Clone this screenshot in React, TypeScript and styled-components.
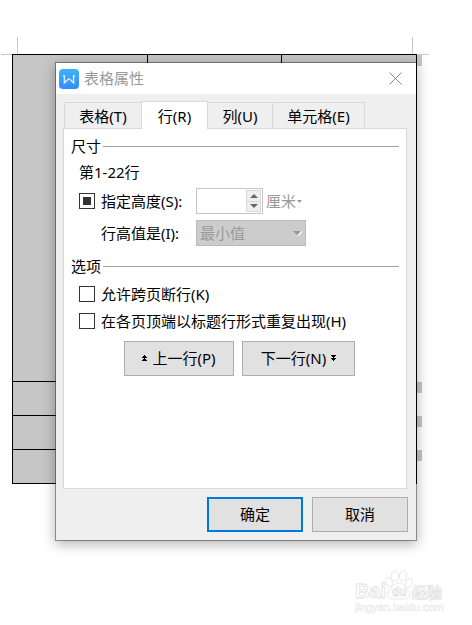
import React, { useEffect, useRef } from 'react';
import styled, { createGlobalStyle } from 'styled-components';

const GlobalStyle = createGlobalStyle`
  * { box-sizing: border-box; }
  body {
    margin: 0;
    background: #fff;
    color: #000;
    font-family: "Noto Sans", "Noto Sans CJK SC", sans-serif;
    font-size: 15px;
    font-weight: 400;
    line-height: 20px;
  }
  button, input, select { font: inherit; color: inherit; margin: 0; }
  svg { display: block; flex: none; }
`;

const Page = styled.main`
  display: grid;
  grid-template-columns: minmax(0, 1fr);
  min-height: 100vh;
  position: relative;
`;

const Sheet = styled.div`
  grid-area: 1 / 1;
  margin: 54px 55px 0 12px;
  align-self: start;
  position: relative;
`;

const SheetTable = styled.table`
  width: 100%;
  table-layout: fixed;
  border-collapse: separate;
  border-spacing: 0;
  background: #c6c6c6;
  border: solid #000;
  border-width: 1px 0 0 1px;
`;

const SheetRow = styled.tr<{ $tall?: boolean }>`
  height: ${p => (p.$tall ? 327 : 34)}px;
`;

const SheetCell = styled.td`
  padding: 0;
  border: solid #000;
  border-width: 0 1px 1px 0;
  position: relative;
`;

const RowEndMark = styled.span`
  position: absolute;
  top: 0;
  right: -6px;
  width: 5px;
  height: 11px;
  background: #c6c6c6;
`;

const CropMark = styled.span<{ $side: 'left' | 'right' }>`
  position: absolute;
  top: -17px;
  ${p => p.$side}: ${p => (p.$side === 'left' ? 5 : 4)}px;
  width: 1px;
  height: 17px;
  background: #c8c8c8;
  &::after {
    content: '';
    position: absolute;
    top: 17px;
    ${p => p.$side}: -16px;
    width: 11px;
    height: 1px;
    background: #c8c8c8;
  }
`;

const Dialog = styled.section`
  grid-area: 1 / 1;
  align-self: start;
  position: relative;
  margin: 62px 55px 0;
  border: 1px solid rgba(0, 0, 0, 0.36);
  background: #efefef;
  background-clip: padding-box;
  box-shadow: 0 3px 12px rgba(0, 0, 0, 0.3);
`;

const TitleBar = styled.header`
  display: flex;
  align-items: center;
  height: 31px;
  padding: 0 14px 0 3px;
  gap: 5px;
  background: #fff;
`;

const Title = styled.h1`
  flex: 1;
  margin: 0;
  padding-bottom: 2px;
  font-size: 15px;
  font-weight: 400;
  color: #999;
`;

const CloseButton = styled.button`
  display: flex;
  padding: 0;
  border: 0;
  background: none;
`;

const TabList = styled.div`
  display: flex;
  align-items: flex-end;
  padding: 7px 8px 0;
`;

const Tab = styled.button<{ $width: number; $active?: boolean }>`
  flex: none;
  width: ${p => p.$width}px;
  height: ${p => (p.$active ? 28 : 26)}px;
  margin-bottom: ${p => (p.$active ? -1 : 0)}px;
  padding: 0;
  border: solid #d9d9d9;
  border-width: ${p => (p.$active ? '1px 1px 0' : '1px 0 0')};
  background: ${p => (p.$active ? '#fff' : '#efefef')};
  position: relative;
  &:first-child { border-left-width: 1px; }
  &:last-child { border-width: 1px 1px 0; }
`;

const Panel = styled.div`
  margin: 0 9px 0 7px;
  padding: 7px 7px 112px;
  border: 1px solid #d9d9d9;
  background: #fff;
`;

const Group = styled.fieldset`
  margin: 0;
  padding: 0;
  border: 0;
  min-width: 0;
  & + & { margin-top: 10px; }
`;

const Legend = styled.legend`
  display: flex;
  align-items: center;
  gap: 2px;
  width: 100%;
  padding: 0;
  &::after {
    content: '';
    flex: 1;
    height: 1px;
    background: #a0a0a0;
  }
`;

const GroupBody = styled.div<{ $top: number; $gap: number }>`
  display: flex;
  flex-direction: column;
  gap: ${p => p.$gap}px;
  padding: ${p => p.$top}px 8px 0;
`;

const FieldRow = styled.div`
  display: grid;
  grid-template-columns: 117px auto 1fr;
  align-items: center;
  height: 26px;
`;

const CheckLabel = styled.label`
  display: flex;
  align-items: center;
  gap: 6px;
  white-space: nowrap;
`;

const IndentedLabel = styled.label`
  padding-left: 22px;
  white-space: nowrap;
`;

const CheckInput = styled.input`
  appearance: none;
  width: 16px;
  height: 16px;
  border: 1px solid #333;
  background: #fff;
  display: grid;
  place-items: center;
  &:indeterminate::before {
    content: '';
    width: 8px;
    height: 8px;
    background: #333;
  }
`;

const SpinBox = styled.div`
  display: flex;
  width: 67px;
  height: 26px;
  padding: 1px;
  border: 1px solid #c6c6c6;
  background: #fff;
`;

const SpinInput = styled.input`
  flex: 1;
  min-width: 0;
  padding: 0 4px;
  border: 0;
  background: none;
`;

const SpinButtons = styled.div`
  display: flex;
  flex-direction: column;
  width: 15px;
  border: 1px solid #d9d9d9;
`;

const SpinButton = styled.button`
  flex: 1;
  display: flex;
  align-items: center;
  justify-content: center;
  padding: 0;
  border: 0;
  background: #efefef;
  & + & { border-top: 1px solid #d9d9d9; }
`;

const UnitButton = styled.button`
  display: flex;
  align-items: center;
  justify-self: start;
  gap: 1px;
  padding: 0;
  margin-left: 3px;
  border: 0;
  background: none;
  color: #999;
`;

const SelectWrap = styled.div`
  display: grid;
  align-items: center;
  width: 110px;
`;

const RuleSelect = styled.select`
  grid-area: 1 / 1;
  appearance: none;
  width: 100%;
  height: 26px;
  padding: 0 0 0 3px;
  border: 1px solid #bcbcbc;
  border-radius: 0;
  background: #ccc;
  color: #999;
  opacity: 1;
`;

const SelectArrow = styled.svg`
  grid-area: 1 / 1;
  justify-self: end;
  margin-right: 4px;
  pointer-events: none;
`;

const StepButtons = styled.div`
  display: grid;
  grid-template-columns: 110px 113px;
  justify-content: center;
  gap: 8px;
  padding: 10px 0 0 9px;
`;

const Button = styled.button<{ $primary?: boolean }>`
  display: flex;
  align-items: center;
  justify-content: center;
  gap: 5px;
  height: 35px;
  padding: 0 0 2px;
  border: ${p => (p.$primary ? '2px solid #0078d7' : '1px solid #adadad')};
  background: #e1e1e1;
`;

const Footer = styled.footer`
  display: grid;
  grid-template-columns: 96px 96px;
  justify-content: end;
  gap: 9px;
  padding: 8px;
`;

const Watermark = styled.div`
  position: absolute;
  right: 26px;
  bottom: 11px;
  width: 92px;
`;

function WpsLogo() {
  return (
    <svg width="20" height="20" viewBox="0 0 20 20" aria-hidden="true">
      <defs>
        <linearGradient id="wps" x1="0" y1="0" x2="0" y2="1">
          <stop offset="0" stopColor="#3fb2fc" />
          <stop offset="1" stopColor="#328dfb" />
        </linearGradient>
      </defs>
      <rect width="20" height="20" rx="4" fill="url(#wps)" />
      <path d="M4 6.7h1.4v7.1L10 9.6l4.6 4.2V6.7H16" fill="none" stroke="#d9eeff" strokeWidth="1.4" />
    </svg>
  );
}

function Triangle({ w, h, up, color }: { w: number; h: number; up?: boolean; color: string }) {
  return (
    <svg width={w} height={h} viewBox={`0 0 ${w} ${h}`} aria-hidden="true">
      <path d={up ? `M0 ${h}L${w / 2} 0L${w} ${h}z` : `M0 0H${w}L${w / 2} ${h}z`} fill={color} />
    </svg>
  );
}

function DoubleArrow({ down }: { down?: boolean }) {
  return (
    <svg width="5" height="6" viewBox="0 0 5 6" shapeRendering="crispEdges" aria-hidden="true">
      <path
        d={down ? 'M0 0h5v1H4v1H3v1h2v1H4v1H3v1H2V5H1V4H0V3h2V2H1V1H0z' : 'M2 0h1v1h1v1h1v1H3v1h1v1h1v1H0V5h1V4h1V3H0V2h1V1h1z'}
      />
    </svg>
  );
}

function BaiduMark() {
  return (
    <Watermark>
      <svg width="92" height="44" viewBox="0 0 92 44" role="img" aria-label="Baidu 经验 jingyan.baidu.com">
        <g fill="#fff" stroke="#e2e2e2" strokeWidth="0.8" fontFamily="Liberation Sans, sans-serif" fontWeight="700">
          <text x="1" y="28" fontSize="20">Bai</text>
          <ellipse cx="35" cy="12" rx="3.3" ry="4.6" transform="rotate(-15 35 12)" />
          <ellipse cx="41" cy="6" rx="3.6" ry="5" />
          <ellipse cx="49" cy="6" rx="3.6" ry="5" transform="rotate(10 49 6)" />
          <ellipse cx="55" cy="13" rx="3.3" ry="4.6" transform="rotate(15 55 13)" />
          <path d="M45 13c5 0 6 5 9 8 4 4 1 8-4 8H39c-6 0-7-5-4-9 3-3 5-7 10-7z" />
          <text x="38" y="26" fontSize="12">du</text>
          <text x="58" y="28" fontSize="15" fontFamily="Noto Sans CJK SC, sans-serif">经验</text>
        </g>
        <text x="1" y="41" fontSize="11" fontFamily="Liberation Sans, sans-serif" fill="#f4f4f4" stroke="#ececec" strokeWidth="0.6">
          jingyan.baidu.com
        </text>
      </svg>
    </Watermark>
  );
}

function MixedCheckbox({ id }: { id: string }) {
  const ref = useRef<HTMLInputElement>(null);
  useEffect(() => {
    if (ref.current) ref.current.indeterminate = true;
  }, []);
  return <CheckInput ref={ref} id={id} type="checkbox" />;
}

export default function App() {
  return (
    <Page>
      <GlobalStyle />
      <Sheet>
        <SheetTable>
          <tbody>
            {[0, 1, 2, 3].map(row => (
              <SheetRow key={row} $tall={row === 0}>
                <SheetCell />
                <SheetCell />
                <SheetCell>
                  <RowEndMark />
                </SheetCell>
              </SheetRow>
            ))}
          </tbody>
        </SheetTable>
        <CropMark $side="left" />
        <CropMark $side="right" />
      </Sheet>

      <Dialog role="dialog" aria-labelledby="dialog-title">
        <TitleBar>
          <WpsLogo />
          <Title id="dialog-title">表格属性</Title>
          <CloseButton type="button" aria-label="关闭">
            <svg width="13" height="13" viewBox="0 0 13 13">
              <path d="M0.5 0.5l12 12M12.5 0.5l-12 12" stroke="#888" fill="none" />
            </svg>
          </CloseButton>
        </TitleBar>

        <TabList role="tablist">
          <Tab type="button" role="tab" $width={77}>表格(T)</Tab>
          <Tab type="button" role="tab" aria-selected="true" $width={67} $active>行(R)</Tab>
          <Tab type="button" role="tab" $width={64}>列(U)</Tab>
          <Tab type="button" role="tab" $width={93}>单元格(E)</Tab>
        </TabList>

        <Panel role="tabpanel">
          <Group>
            <Legend>尺寸</Legend>
            <GroupBody $top={6} $gap={6}>
              <div>第1-22行</div>
              <FieldRow>
                <CheckLabel htmlFor="height-on">
                  <MixedCheckbox id="height-on" />
                  指定高度(S):
                </CheckLabel>
                <SpinBox>
                  <SpinInput type="text" aria-label="指定高度" />
                  <SpinButtons>
                    <SpinButton type="button" aria-label="增加">
                      <Triangle w={8} h={4} up color="#666" />
                    </SpinButton>
                    <SpinButton type="button" aria-label="减少">
                      <Triangle w={8} h={4} color="#666" />
                    </SpinButton>
                  </SpinButtons>
                </SpinBox>
                <UnitButton type="button">
                  厘米
                  <Triangle w={5} h={3} color="#999" />
                </UnitButton>
              </FieldRow>
              <FieldRow>
                <IndentedLabel htmlFor="height-rule">行高值是(I):</IndentedLabel>
                <SelectWrap>
                  <RuleSelect id="height-rule" disabled>
                    <option>最小值</option>
                  </RuleSelect>
                  <SelectArrow width="9" height="5" viewBox="0 0 9 5" aria-hidden="true">
                    <path d="M5 5L9 1V0z" fill="#fff" stroke="#fff" />
                    <path d="M0 0h8L4 4z" fill="#999" />
                  </SelectArrow>
                </SelectWrap>
              </FieldRow>
            </GroupBody>
          </Group>

          <Group>
            <Legend>选项</Legend>
            <GroupBody $top={8} $gap={7}>
              <CheckLabel>
                <CheckInput type="checkbox" />
                允许跨页断行(K)
              </CheckLabel>
              <CheckLabel>
                <CheckInput type="checkbox" />
                在各页顶端以标题行形式重复出现(H)
              </CheckLabel>
            </GroupBody>
            <StepButtons>
              <Button type="button">
                <DoubleArrow />
                上一行(P)
              </Button>
              <Button type="button">
                下一行(N)
                <DoubleArrow down />
              </Button>
            </StepButtons>
          </Group>
        </Panel>

        <Footer>
          <Button type="button" $primary>确定</Button>
          <Button type="button">取消</Button>
        </Footer>
      </Dialog>

      <BaiduMark />
    </Page>
  );
}
